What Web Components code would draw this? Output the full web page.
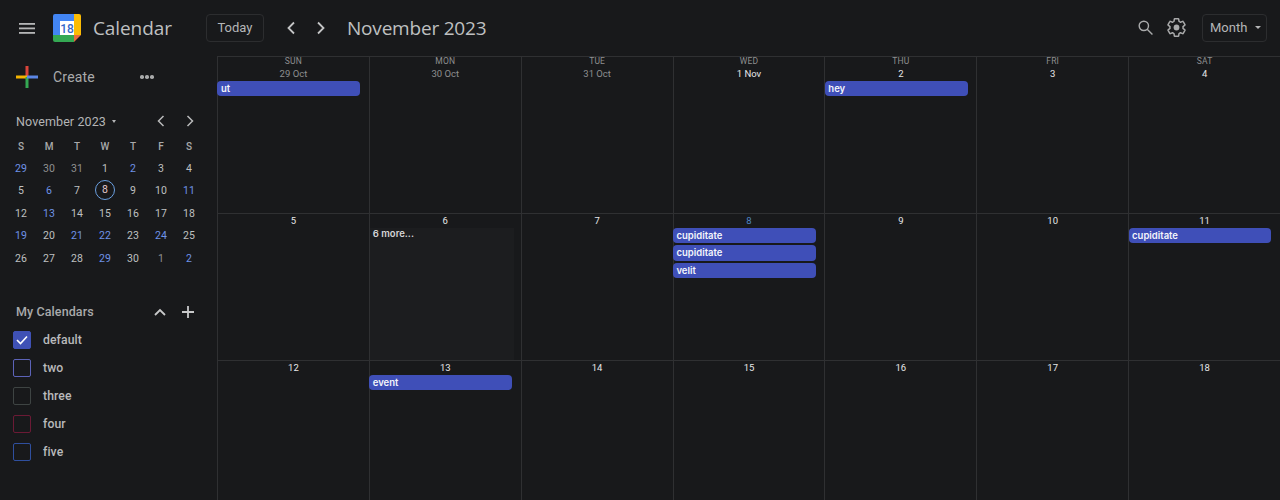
<!DOCTYPE html>
<html>
<head>
<meta charset="utf-8">
<style>
  html, body { margin: 0; height: 100%; background: #18191b; overflow: hidden; }
  body { font-family: Roboto, "Liberation Sans", sans-serif; color: #d5d6d7; }
</style>
</head>
<body>

<cal-app>
  <cal-header slot="header"></cal-header>
  <cal-sidebar slot="side">
    <mini-month></mini-month>
    <calendar-list>
      <calendar-item color="#3f51b5" checked>default</calendar-item>
      <calendar-item color="#5c63b8">two</calendar-item>
      <calendar-item color="#3e4443">three</calendar-item>
      <calendar-item color="#6b1a35">four</calendar-item>
      <calendar-item color="#2f4f9e">five</calendar-item>
    </calendar-list>
  </cal-sidebar>
  <month-grid slot="main">
    <month-cell weekday="SUN" date="29 Oct" muted><event-chip>ut</event-chip></month-cell>
    <month-cell weekday="MON" date="30 Oct" muted></month-cell>
    <month-cell weekday="TUE" date="31 Oct" muted></month-cell>
    <month-cell weekday="WED" date="1 Nov"></month-cell>
    <month-cell weekday="THU" date="2"><event-chip>hey</event-chip></month-cell>
    <month-cell weekday="FRI" date="3"></month-cell>
    <month-cell weekday="SAT" date="4"></month-cell>

    <month-cell date="5"></month-cell>
    <month-cell date="6"><more-panel>6 more...</more-panel></month-cell>
    <month-cell date="7"></month-cell>
    <month-cell date="8" today>
      <event-chip>cupiditate</event-chip>
      <event-chip>cupiditate</event-chip>
      <event-chip>velit</event-chip>
    </month-cell>
    <month-cell date="9"></month-cell>
    <month-cell date="10"></month-cell>
    <month-cell date="11"><event-chip>cupiditate</event-chip></month-cell>

    <month-cell date="12"></month-cell>
    <month-cell date="13"><event-chip>event</event-chip></month-cell>
    <month-cell date="14"></month-cell>
    <month-cell date="15"></month-cell>
    <month-cell date="16"></month-cell>
    <month-cell date="17"></month-cell>
    <month-cell date="18"></month-cell>
  </month-grid>
</cal-app>

<script>
  function shadow(el, html) {
    el.attachShadow({ mode: "open" }).innerHTML = html;
  }

  class CalApp extends HTMLElement {
    constructor() {
      super();
      shadow(this, `
        <style>
          :host { display: grid; grid-template-columns: 217px 1fr; grid-template-rows: 56px 444px; width: 1280px; height: 500px; overflow: hidden; }
          .head { grid-column: 1 / 3; }
        </style>
        <div class="head"><slot name="header"></slot></div>
        <slot name="side"></slot>
        <slot name="main"></slot>`);
    }
  }
  customElements.define("cal-app", CalApp);

  class CalHeader extends HTMLElement {
    constructor() {
      super();
      shadow(this, `
        <style>
          :host { display: flex; align-items: center; height: 56px; box-sizing: border-box; padding: 0 13px 1px 19px; color: #c9cacb; }
          svg { display: block; flex: none; }
          .logo { margin-left: 17px; }
          .name { font: 400 19px/28px "Open Sans", Roboto, sans-serif; color: #bfc0c1; margin-left: 11px; width: 113px; letter-spacing: -.1px; }
          .btn { box-sizing: border-box; height: 28px; border: 1px solid #2c2d2f; border-radius: 4px; font-size: 13px; display: flex; align-items: center; color: #b5b6b7; }
          .today { width: 58px; justify-content: center; }
          .prev { margin-left: 22px; }
          .next { margin-left: 20px; }
          .title { font: 400 19px/28px "Open Sans", Roboto, sans-serif; color: #bfc0c1; margin-left: 21px; flex: 1; letter-spacing: -.2px; }
          .month { width: 65px; padding-left: 7px; gap: 8px; margin-left: 15px; }
          .gear { margin-left: 13px; }
          .caret { width: 0; height: 0; border: 3px solid transparent; border-top: 3.500px solid #b5b6b7; border-bottom: 0; }
        </style>
        <svg width="16" height="14" viewBox="0 0 16 14" fill="#b5b6b7"><rect y="2" width="16" height="1.800"/><rect y="6.500" width="16" height="1.800"/><rect y="11" width="16" height="1.800"/></svg>
        <svg class="logo" width="30" height="30" viewBox="0 0 30 30">
          <path d="M3 1h21v7H8v14H1V3a2 2 0 0 1 2-2z" fill="#4285f4"/>
          <path d="M22 1h5a2 2 0 0 1 2 2v19h-7z" fill="#fbbc04"/>
          <path d="M1 22h21v7H3a2 2 0 0 1-2-2z" fill="#34a853"/>
          <path d="M22 22h7l-7 7z" fill="#ea6b3c"/>
          <rect x="8" y="8" width="14" height="14" fill="#fff"/>
          <text x="15" y="19.500" text-anchor="middle" font-family="Roboto, sans-serif" font-size="12" font-weight="500" fill="#3467c8">18</text>
        </svg>
        <span class="name">Calendar</span>
        <div class="btn today">Today</div>
        <svg class="prev" width="10" height="14" viewBox="0 0 10 14" fill="none" stroke="#c4c5c6" stroke-width="1.800"><path d="M8 1.500 2.500 7 8 12.500"/></svg>
        <svg class="next" width="10" height="14" viewBox="0 0 10 14" fill="none" stroke="#c4c5c6" stroke-width="1.800"><path d="M2 1.500 7.500 7 2 12.500"/></svg>
        <span class="title">November 2023</span>
        <svg width="15" height="15" viewBox="0 0 18 18" fill="none" stroke="#a9aaab" stroke-width="1.700"><circle cx="7" cy="7" r="5.600"/><path d="m11 11 6.300 6.300"/></svg>
        <svg class="gear" width="21" height="21" viewBox="0 0 24 24" fill="none" stroke="#a9aaab" stroke-width="1.700" stroke-linejoin="round">
          <path d="M19.430 12.980c.04-.32.07-.64.07-.98 0-.34-.03-.66-.07-.98l2.110-1.650c.19-.15.24-.42.12-.64l-2-3.460c-.12-.22-.39-.3-.61-.22l-2.490 1c-.52-.4-1.080-.73-1.690-.98l-.38-2.650C14.460 2.180 14.250 2 14 2h-4c-.25 0-.46.18-.49.42l-.38 2.650c-.61.25-1.170.59-1.690.98l-2.490-1c-.23-.09-.49 0-.61.22l-2 3.460c-.13.22-.07.49.12.64l2.110 1.650c-.04.32-.07.65-.07.98 0 .33.03.66.07.98l-2.110 1.650c-.19.15-.24.42-.12.64l2 3.460c.12.22.39.3.61.22l2.490-1c.52.4 1.080.73 1.690.98l.38 2.650c.03.24.24.42.49.42h4c.25 0 .46-.18.49-.42l.38-2.650c.61-.25 1.170-.59 1.690-.98l2.490 1c.23.09.49 0 .61-.22l2-3.460c.12-.22.07-.49-.12-.64l-2.110-1.650z"/>
          <circle cx="12" cy="12" r="3.300" fill="#a9aaab" stroke="none"/>
        </svg>
        <div class="btn month">Month <span class="caret"></span></div>`);
    }
  }
  customElements.define("cal-header", CalHeader);

  class CalSidebar extends HTMLElement {
    constructor() {
      super();
      shadow(this, `
        <style>
          :host { display: block; box-sizing: border-box; }
          .create { display: flex; align-items: center; height: 42px; padding-left: 16px; }
          .label { font-size: 14px; letter-spacing: .2px; color: #a9aaab; margin-left: 15px; width: 87px; }
          .dots { display: flex; gap: 1.500px; }
          .dots i { width: 3.500px; height: 3.500px; border-radius: 50%; background: #a9aaab; }
        </style>
        <div class="create">
          <svg width="22" height="22" viewBox="0 0 22 22">
            <rect x="9.500" y="0" width="3" height="11" fill="#d9453b"/>
            <rect x="0" y="9.500" width="11" height="3" fill="#f4b400"/>
            <rect x="9.500" y="11" width="3" height="11" fill="#34a853"/>
            <rect x="11" y="9.500" width="11" height="3" fill="#5b86e5"/>
          </svg>
          <span class="label">Create</span>
          <span class="dots"><i></i><i></i><i></i></span>
        </div>
        <slot></slot>`);
    }
  }
  customElements.define("cal-sidebar", CalSidebar);

  class MiniMonth extends HTMLElement {
    constructor() {
      super();
      const blue = { "0": 1, "4": 1, "8": 1, "13": 1, "15": 1, "21": 1, "23": 1, "24": 1, "26": 1, "31": 1, "34": 1 };
      const dim = { "1": 1, "2": 1, "33": 1 };
      const days = [29,30,31,1,2,3,4,5,6,7,8,9,10,11,12,13,14,15,16,17,18,19,20,21,22,23,24,25,26,27,28,29,30,1,2];
      const cells = days.map((d, i) => {
        let cls = blue[i] ? "blue" : dim[i] ? "dim" : "";
        if (i === 10) cls = "today";
        return `<span class="${cls}"><b>${d}</b></span>`;
      }).join("");
      shadow(this, `
        <style>
          :host { display: block; padding: 13px 0 0 7px; width: 210px; box-sizing: border-box; }
          .top { display: flex; align-items: center; height: 20px; padding-left: 9px; }
          .m { font-size: 12.500px; color: #b4b5b6; letter-spacing: .1px; }
          .caret { width: 0; height: 0; margin-left: 6px; border: 2.500px solid transparent; border-top: 3px solid #b4b5b6; border-bottom: 0; }
          .nav { margin-left: auto; display: flex; gap: 19px; margin-right: 15px; }
          svg { display: block; }
          .grid { display: grid; grid-template-columns: repeat(7, 28px); grid-auto-rows: 22.400px; margin-top: 4px; font-size: 10.500px; text-align: center; }
          .grid span { display: flex; align-items: center; justify-content: center; color: #bfc0c1; }
          .grid b { font-weight: 400; }
          .wd { color: #a9aaab !important; font-weight: 500; font-size: 10px; }
          .dim { color: #8f9091 !important; }
          .blue { color: #6f93e8 !important; font-weight: 500; }
          .today b { box-sizing: border-box; width: 20px; height: 20px; margin-top: -1px; line-height: 17px; border: 1.500px solid #6a9fe0; border-radius: 50%; color: #e3c9cc; }
        </style>
        <div class="top">
          <span class="m">November 2023</span><span class="caret"></span>
          <span class="nav">
            <svg width="10" height="12" viewBox="0 0 10 12" fill="none" stroke="#b9babb" stroke-width="1.500"><path d="M7.500 1 2.500 6l5 5"/></svg>
            <svg width="10" height="12" viewBox="0 0 10 12" fill="none" stroke="#b9babb" stroke-width="1.500"><path d="M2.500 1l5 5-5 5"/></svg>
          </span>
        </div>
        <div class="grid">
          <span class="wd">S</span><span class="wd">M</span><span class="wd">T</span><span class="wd">W</span><span class="wd">T</span><span class="wd">F</span><span class="wd">S</span>
          ${cells}
        </div>`);
    }
  }
  customElements.define("mini-month", MiniMonth);

  class CalendarList extends HTMLElement {
    constructor() {
      super();
      shadow(this, `
        <style>
          :host { display: block; padding: 28px 0 0 13px; }
          .top { display: flex; align-items: center; height: 28px; padding-left: 3px; }
          .t { font-size: 12.500px; font-weight: 500; color: #a9aaab; letter-spacing: .1px; }
          .up { margin: 2px 0 0 auto; }
          .plus { margin: 2px 22px 0 14px; }
          svg { display: block; }
          .items { display: flex; flex-direction: column; margin-top: 1px; }
        </style>
        <div class="top">
          <span class="t">My Calendars</span>
          <svg class="up" width="14" height="10" viewBox="0 0 14 10" fill="none" stroke="#c8c9ca" stroke-width="1.800"><path d="m2 8 5-5 5 5"/></svg>
          <svg class="plus" width="14" height="14" viewBox="0 0 14 14" fill="none" stroke="#c8c9ca" stroke-width="1.800"><path d="M7 1v12M1 7h12"/></svg>
        </div>
        <div class="items"><slot></slot></div>`);
    }
  }
  customElements.define("calendar-list", CalendarList);

  class CalendarItem extends HTMLElement {
    constructor() {
      super();
      const color = this.getAttribute("color");
      const checked = this.hasAttribute("checked");
      const tick = checked ? `<svg width="12" height="10" viewBox="0 0 12 10" fill="none" stroke="#fff" stroke-width="1.600"><path d="m1 5 3.500 3.500L11 1.500"/></svg>` : "";
      shadow(this, `
        <style>
          :host { display: flex; align-items: center; height: 28px; font-size: 12.200px; font-weight: 500; color: #b9babb; letter-spacing: .1px; }
          .box { box-sizing: border-box; width: 18px; height: 18px; border: 1.500px solid ${color}; border-radius: 2px; margin-right: 12px; display: flex; align-items: center; justify-content: center; background: ${checked ? color : "transparent"}; }
        </style>
        <span class="box">${tick}</span><slot></slot>`);
    }
  }
  customElements.define("calendar-item", CalendarItem);

  class MonthGrid extends HTMLElement {
    constructor() {
      super();
      shadow(this, `
        <style>
          :host { display: grid; grid-template-columns: repeat(7, minmax(0, 1fr)); grid-template-rows: 157px 147px 147px; overflow: hidden; box-sizing: border-box; height: 444px; border-top: 1px solid #2f3032; }
        </style>
        <slot></slot>`);
    }
  }
  customElements.define("month-grid", MonthGrid);

  class MonthCell extends HTMLElement {
    constructor() {
      super();
      const wd = this.getAttribute("weekday");
      const cls = this.hasAttribute("muted") ? "muted" : this.hasAttribute("today") ? "today" : "";
      shadow(this, `
        <style>
          :host { display: block; box-sizing: border-box; border-left: 1px solid #2f3032; border-bottom: 1px solid #2f3032; min-width: 0; }
          .wd { font-size: 8.500px; line-height: 9px; height: 10px; text-align: center; color: #8e8f90; letter-spacing: .2px; }
          .d { font-size: 9.500px; line-height: 11px; text-align: center; color: #e6e7e8; height: 11px; padding-top: 1px; }
          .muted { color: #8e8f90; }
          .today { color: #4e86c6; }
          .list { display: flex; flex-direction: column; gap: 2px; padding: 2px 8.600px 0 0; margin-left: -.6px; }
        </style>
        ${wd ? `<div class="wd">${wd}</div>` : ""}
        <div class="d ${cls}">${this.getAttribute("date")}</div>
        <div class="list"><slot></slot></div>`);
    }
  }
  customElements.define("month-cell", MonthCell);

  class EventChip extends HTMLElement {
    constructor() {
      super();
      shadow(this, `
        <style>
          :host { display: block; box-sizing: border-box; height: 15.400px; padding-left: 3.500px; background: #3f4fb8; border-radius: 4px; color: #f4f5fb; font: 600 9.500px/15px Inter, Roboto, sans-serif; }
        </style>
        <slot></slot>`);
    }
  }
  customElements.define("event-chip", EventChip);

  class MorePanel extends HTMLElement {
    constructor() {
      super();
      shadow(this, `
        <style>
          :host { display: block; box-sizing: border-box; height: 132px; margin: 0 -2px 0 .6px; padding-left: 3px; background: #1c1d1f; color: #d5d6d7; font: 600 9.500px/11px Inter, Roboto, sans-serif; }
        </style>
        <slot></slot>`);
    }
  }
  customElements.define("more-panel", MorePanel);
</script>
</body>
</html>
